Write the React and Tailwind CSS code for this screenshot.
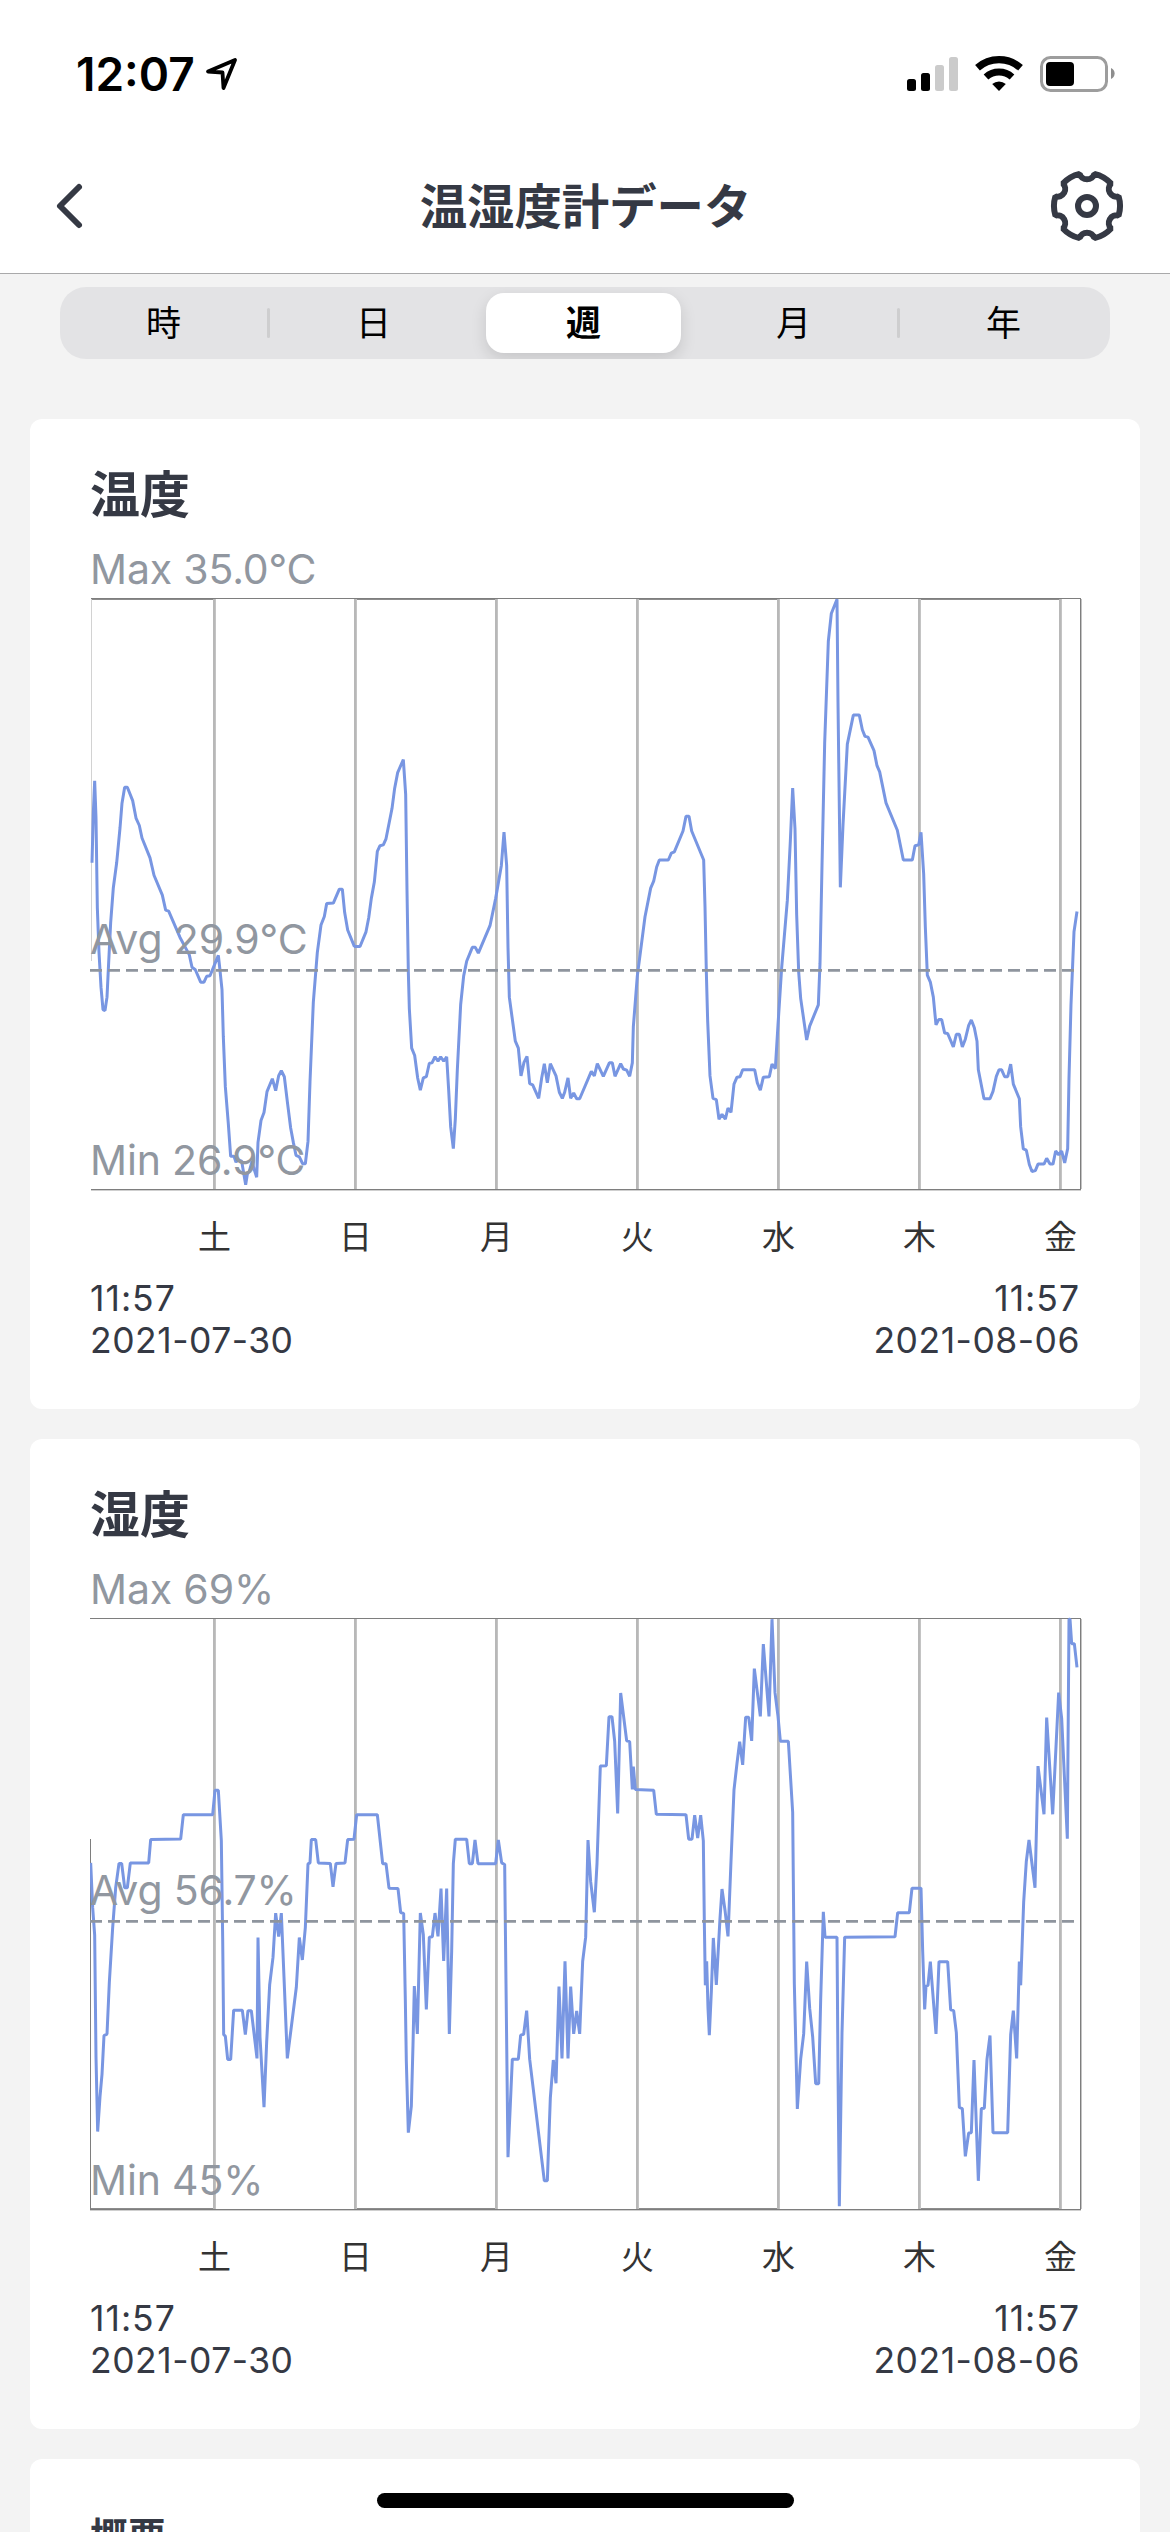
import React from "react";

const DAYS = ["土", "日", "月", "火", "水", "木", "金"];
const GRID_X = [124, 265, 406, 547, 688, 829, 970];

// Each trace is stored in four consecutive pieces: dx/dy place a piece, sy is its vertical density.
const PIECES = [
  { dx: -10, dy: -157, sy: 2.0103 },
  { dx: 250, dy: -17, sy: 2.45 },
  { dx: 510, dy: -17, sy: 2.45 },
  { dx: 750, dy: -17, sy: 2.45 },
];

const TEMPERATURE = [
  "36,850 40,750 44,685 48,760 52,940 57,1030 63,1100 69,1145 75,1147 81,1120 86,1050 92,970 100,900 110,850 120,780 126,730 134,698 142,698 158,725 168,760 178,775 186,800 210,840 222,875 247,915 257,945 266,947 300,1000 320,1025 328,1035 336,1060 346,1065 362,1090 372,1090 380,1078 390,1077 415,1036 419,1060 426,1105 430,1200 436,1300 445,1375 452,1440 462,1440 468,1452 472,1447 485,1450 497,1497 502,1476 508,1470 516,1450 522,1465 530,1482 534,1412 543,1368 552,1352 561,1310 577,1284 587,1308 596,1278 604,1268 613,1280 622,1330 632,1383 640,1412 648,1438 658,1441 668,1455 676,1455 684,1410 690,1290 700,1130 712,1030 723,975 733,958 740,932 760,931 778,903 787,903 794,950 803,985 823,1018",
  "43,898 60,898 78,862 86,828 94,780 103,740 112,665 120,651 130,649 138,634 156,560 164,510 173,472 190,440 197,525 201,760 205,960 208,1050 215,1147 224,1165 233,1220 241,1250 250,1220 259,1217 268,1184 276,1183 285,1168 294,1179 302,1168 311,1179 320,1168 326,1250 332,1340 340,1393 346,1320 352,1200 362,1040 371,970 380,934 397,900 406,900 415,914 450,847 467,780 484,700 492,618 500,700 504,900 508,1022 526,1130 535,1147 543,1215 552,1182 561,1167 569,1234 578,1237 596,1270 605,1220 613,1185 622,1232 631,1185 648,1215 658,1255 667,1270 674,1255 684,1220 692,1270 701,1257 710,1271 719,1271 754,1204 763,1215 772,1185 790,1216 808,1183 817,1183",
  "45,1216 62,1185 70,1198 80,1201 89,1216 97,1183 100,1095 112,970 135,825 152,755 161,738 170,703 178,686 205,686 214,669 223,666 249,615 258,579 267,579 275,615 311,686 315,800 319,960 323,1080 330,1215 339,1270 349,1273 357,1321 366,1309 376,1321 384,1294 393,1304 402,1235 411,1218 420,1217 428,1200 464,1200 472,1232 481,1250 490,1218 508,1217 516,1186 526,1197 534,1090 545,950 562,785 571,640 578,510 585,610 590,820 596,960 602,1025 620,1127 629,1093 655,1041 660,940 666,700 674,400 685,150 694,82 711,47 714,300 721,753 729,600 742,402 760,331 778,331 787,367 795,383 804,385 822,418",
  "111,455 119,470 138,546 172,613 190,686 217,686 225,651 236,649 243,618 251,720 256,850 262,968 271,985 280,1022 288,1090 296,1077 305,1077 314,1110 323,1111 340,1144 349,1113 358,1113 367,1144 376,1125 386,1091 394,1078 403,1097 411,1130 415,1200 432,1271 450,1271 459,1253 469,1216 477,1200 485,1200 494,1217 503,1217 512,1186 520,1235 538,1271 542,1340 550,1394 559,1397 568,1432 576,1449 586,1447 594,1431 612,1431 620,1417 630,1431 639,1431 647,1399 656,1408 665,1399 674,1428 683,1393 687,1220 693,1040 702,862 711,812",
];

const HUMIDITY = [
  "32,810 38,900 44,955 48,1200 53,1350 60,1280 66,1235 72,1157 81,1154 88,1050 98,940 107,860 117,811 125,811 134,860 142,860 151,810 206,810 212,763 302,762 310,713 398,713 405,664 415,664 424,765 428,960 431,1155 436,1158 443,1205 452,1205 461,1106 487,1106 496,1155 504,1107 514,1107 531,1203 534,960 540,1160 552,1301 560,1170 569,1055 579,1000 587,911 596,958 604,911 612,1040 622,1203 649,1060 658,960 667,1005 676,940 684,812 690,810 694,763 707,763 715,810 751,811 759,858 768,811 795,810 803,763",
  "42,586 50,526 112,526 128,646 138,646 147,706 174,707 182,766 191,768 196,980 199,1130 205,1305 214,1240 219,1090 223,946 232,1063 241,767 250,820 259,1003 268,826 277,825 285,767 294,824 303,707 311,884 320,707 328,1063 335,860 340,646 346,586 380,586 388,646 397,646 405,588 414,646 467,646 475,588 485,644 494,648 498,940 504,1365 517,1125 535,1125 542,1066 551,1064 560,1006 569,1125 613,1423 622,1423 631,1220 640,1127 648,1184 657,947 666,1123 675,885 684,1123 692,947 701,1063 710,1007 719,1063 728,885 737,826 744,588 752,690 763,765 771,646 781,407 799,406 807,286 816,286 824,346",
  "53,523 62,228 80,345 89,347 97,464 100,408 106,464 161,466 169,525 258,526 266,586 276,586 284,527 293,583 302,527 310,590 313,790 316,944 320,885 324,1000 328,1066 334,960 340,828 349,943 360,780 366,708 375,760 384,824 393,640 402,465 411,400 419,347 428,404 437,287 446,287 455,345 463,168 481,285 490,108 507,285 516,47 525,227 534,285 541,346 565,346 578,520 583,940 592,1247 602,1125 611,1063 620,886 629,1000 638,1070 647,1185 656,1185 662,980 670,764 675,826 711,826 714,1150 718,1485 726,1060 734,826",
  "165,825 173,766 208,766 216,706 243,706 248,860 254,1003 258,946 264,944 271,886 288,1063 297,886 323,886 332,1004 341,1006 349,1060 358,1243 367,1246 376,1363 386,1306 394,1305 402,1127 415,1423 424,1246 433,1245 441,1125 450,1067 459,1305 503,1305 512,1065 520,1006 530,1123 538,886 542,944 551,740 559,640 567,588 585,705 594,407 612,525 620,288 638,525 656,227 665,290 682,585 687,47 690,47 695,107 703,107 711,165",
];

const toPoints = (trace) =>
  trace
    .flatMap((part, i) =>
      part.split(" ").map((pair) => {
        const [x, y] = pair.split(",").map(Number);
        const { dx, dy, sy } = PIECES[i];
        return `${(x / 3 + dx).toFixed(2)},${(y / sy + dy).toFixed(2)}`;
      })
    )
    .join(" ");

function Chart({ trace, avgY, heavyEdge, leftFrom, leftX, leftColor, leftTo }) {
  const heavyY = heavyEdge === "top" ? 2 : 591;
  return (
    <svg width="994" height="596" viewBox="0 0 994 596" className="block">
      <g shapeRendering="crispEdges">
        <rect x={leftX} y="1" width={991 - leftX} height="1" fill="#7e7e7e" />
        <rect x={leftX} y="592" width={991 - leftX} height="1" fill="#7e7e7e" />
        <rect x={leftX} y="593" width={991 - leftX} height="1" fill="#cfcfcf" />
        {[[leftX, 124], [265, 406], [547, 688], [829, 970]].map(([a, b]) => (
          <rect key={a} x={a} y={heavyY} width={b - a} height="1" fill="#8c8c8c" />
        ))}
        <rect x={leftX} y={leftFrom} width="1" height={leftTo - leftFrom} fill={leftColor} />
        <rect x="990" y="2" width="1" height="591" fill="#7e7e7e" />
        <rect x="991" y="2" width="1" height="590" fill="#c4c4c4" />
        {GRID_X.map((x) => (
          <rect key={x} x={x - 1} y="2" width="2" height="590" fill="#b8b8b8" />
        ))}
        {GRID_X.map((x) => (
          <rect key={x} x={x + 1} y="2" width="1" height="590" fill="#c4c4c4" />
        ))}
      </g>
      <polyline points={toPoints(trace)} fill="none" stroke="#7896e2" strokeWidth="3" strokeLinejoin="bevel" />
      <line x1="0" y1={avgY} x2="986" y2={avgY} stroke="#8f959e" strokeWidth="2.8" strokeDasharray="12 6" />
    </svg>
  );
}

function Card({ title, max, avg, min, avgClass, children }) {
  return (
    <section className="h-[990px] shrink-0 rounded-xl bg-white px-[60px] pt-[40px]">
      <h2 className="h-[70px] text-[50px] leading-[72px] font-bold">{title}</h2>
      <div className="h-[68px] pt-[15px] text-[41px] leading-[50px] tracking-[-0.15px] text-[#9197a0]">{max}</div>
      <div className="relative h-[596px] text-[41px] leading-[50px] tracking-[-0.15px] text-[#9197a0]">
        {children}
        <div className={avgClass}>{avg}</div>
        <div className="absolute top-[538px] left-0">{min}</div>
      </div>
      <div className="ml-[54px] flex h-[84px] w-[987px] items-center pt-[6px] text-[33px] text-[#333]">
        {DAYS.map((d) => (
          <span key={d} className="w-[141px] text-center">{d}</span>
        ))}
      </div>
      <div className="mt-[1px] flex justify-between text-[35.5px] leading-[42px] tracking-[0.5px]">
        <div>
          <div className="tracking-[1px]">11:57</div>
          <div>2021-07-30</div>
        </div>
        <div className="text-right">
          <div className="tracking-[1px]">11:57</div>
          <div>2021-08-06</div>
        </div>
      </div>
    </section>
  );
}

function StatusBar() {
  return (
    <div className="flex h-[138px] items-start justify-between pt-[47px] pr-[54px] pl-[76px]">
      <div className="flex items-start gap-[11px]">
        <span className="text-[46px] leading-[54px] font-semibold text-black">12:07</span>
        <svg width="32" height="37" viewBox="0 0 32 37" className="mt-[10px]">
          <path d="M2 14.5 29 3 17.5 31 16.5 15.5Z" fill="none" stroke="#000" strokeWidth="3.8" strokeLinejoin="round" />
        </svg>
      </div>
      <svg width="209" height="38" viewBox="0 0 209 38" className="mt-[8px]">
        <rect x="0" y="24" width="9" height="12" rx="2.5" />
        <rect x="14" y="18" width="9" height="18" rx="2.5" />
        <rect x="28" y="10" width="9" height="26" rx="2.5" fill="#cbcbcb" />
        <rect x="42" y="2" width="9" height="34" rx="2.5" fill="#cbcbcb" />
        <path d="M70.5 12.8a32.5 32.5 0 0 1 43 0" fill="none" stroke="#000" strokeWidth="7.2" />
        <path d="M79 22a19.5 19.5 0 0 1 26 0" fill="none" stroke="#000" strokeWidth="7" />
        <path d="M85.2 29a10.5 10.5 0 0 1 13.6 0L92 36Z" />
        <rect x="134.5" y="2.5" width="65" height="33" rx="9" fill="none" stroke="#9d9d9d" strokeWidth="3" />
        <rect x="139" y="7" width="28" height="24" rx="4" />
        <path d="M204 13a6 6 0 0 1 0 11Z" fill="#8e8e8e" />
      </svg>
    </div>
  );
}

function Tab({ label, selected, divided }) {
  return (
    <div className="relative flex h-[72px] w-[210px] items-center justify-center pr-[3px]">
      {selected ? (
        <div className="flex h-[60px] w-[195px] items-center justify-center rounded-[18px] bg-white font-bold shadow-[0_6px_16px_rgba(0,0,0,0.13)]">{label}</div>
      ) : (
        <span>{label}</span>
      )}
      {divided && <span className="absolute top-[21px] right-0 h-[30px] w-[3px] rounded-full bg-[#cececf]" />}
    </div>
  );
}

export default function App() {
  return (
    <div className="relative flex h-[2532px] w-[1170px] flex-col overflow-hidden bg-[#f3f3f3] font-[Inter,'Noto_Sans_CJK_JP',sans-serif] text-[#353944]">
      <header className="h-[274px] shrink-0 border-b border-[#a9a9aa] bg-white">
        <StatusBar />
        <div className="flex h-[135px] items-center justify-between pr-[45px] pl-[54px]">
          <svg width="72" height="56" viewBox="0 0 72 56">
            <path d="M25 9 6 28 25 47" fill="none" stroke="#353944" strokeWidth="6" strokeLinecap="round" strokeLinejoin="round" />
          </svg>
          <h1 className="pt-[2px] text-[47.4px] leading-[70px] font-bold">温湿度計データ</h1>
          <svg width="80" height="80" viewBox="-42 -40 80 80">
            <g fill="none" stroke="#353944" strokeWidth="6" strokeLinejoin="bevel">
              <path d="M7.4-32.2A33 33 0 0 1 24.1-22.5A7.7 7.7 0 0 0 31.6-9.6A33 33 0 0 1 31.6 9.6A7.7 7.7 0 0 0 24.1 22.5A33 33 0 0 1 7.4 32.2A7.7 7.7 0 0 0-7.4 32.2A33 33 0 0 1-24.1 22.5A7.7 7.7 0 0 0-31.6 9.6A33 33 0 0 1-31.6-9.6A7.7 7.7 0 0 0-24.1-22.5A33 33 0 0 1-7.4-32.2A7.7 7.7 0 0 0 7.4-32.2Z" />
              <circle r="9" />
            </g>
          </svg>
        </div>
      </header>
      <nav className="mx-[60px] mt-[13px] flex h-[72px] shrink-0 overflow-hidden rounded-[26px] bg-[#e3e3e5] text-[35px] text-black">
        <Tab label="時" divided />
        <Tab label="日" />
        <Tab label="週" selected />
        <Tab label="月" divided />
        <Tab label="年" />
      </nav>
      <main className="mx-[30px] mt-[60px] flex flex-col gap-[30px]">
        <Card title="温度" max="Max 35.0°C" avg="Avg 29.9°C" min="Min 26.9°C" avgClass="absolute top-[317px] left-0">
          <Chart trace={TEMPERATURE} avgY={373.3} heavyEdge="top" leftX={1} leftFrom={2} leftTo={364} leftColor="#d2d2d2" />
        </Card>
        <Card title="湿度" max="Max 69%" avg="Avg 56.7%" min="Min 45%" avgClass="absolute top-[248px] left-0">
          <Chart trace={HUMIDITY} avgY={304.3} heavyEdge="bottom" leftX={0} leftFrom={222} leftTo={593} leftColor="#7e7e7e" />
        </Card>
        <section className="h-[300px] shrink-0 rounded-xl bg-white px-[60px] pt-[50px]">
          <h2 className="text-[38px] leading-[54px] font-bold">概要</h2>
        </section>
      </main>
      <div className="absolute top-[2493px] left-[377px] h-[15px] w-[417px] rounded-full bg-black" />
    </div>
  );
}
